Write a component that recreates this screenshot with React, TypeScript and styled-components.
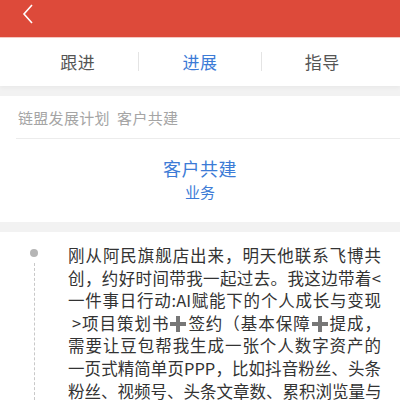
import React from 'react';
import styled, { createGlobalStyle } from 'styled-components';

const GlobalStyle = createGlobalStyle`
    body {
        margin: 0;
        background: #f2f2f2;
        font-family: "Noto Sans CJK SC", "Noto Sans", sans-serif;
    }
`

const Page = styled.div`
    width: 400px;
    height: 400px;
    overflow: hidden;
    background: #f2f2f2;
`

const Header = styled.div`
    height: 37px;
    background: #dd4a3a;
    border-bottom: 1px solid #f6c9c3;
    display: flex;
    align-items: flex-start;
    padding-left: 20px;
`

const Back = styled.svg`
    width: 16px;
    height: 22px;
    margin-top: 4px;
`

const Tabs = styled.div`
    height: 48px;
    background: #fff;
    display: flex;
    align-items: center;
    padding: 0 17px;
    box-shadow: 0 2px 4px rgba(0, 0, 0, 0.04);
`

const Tab = styled.div<{ $active?: boolean; $first?: boolean }>`
    flex: 1;
    text-align: center;
    font-size: 17px;
    color: ${p => (p.$active ? '#3c7bd6' : '#555')};
    border-left: ${p => (p.$first ? 'none' : '1px solid #e4e4e4')};
    line-height: 19px;
    margin-top: -2px;
    letter-spacing: 0.5px;
`

const Card = styled.div`
    background: #fff;
    margin-top: 10px;
`

const Crumb = styled.div`
    height: 42px;
    margin-left: 16px;
    border-bottom: 1px solid #ececec;
    display: flex;
    align-items: center;
    padding-left: 2px;
    font-size: 15px;
    color: #a5a5a5;
    letter-spacing: 0.3px;
`

const Summary = styled.div`
    height: 83px;
    display: flex;
    flex-direction: column;
    align-items: center;
    padding-top: 17px;
    box-sizing: border-box;
`

const Title = styled.div`
    font-size: 18px;
    color: #3c7bd6;
    line-height: 24px;
    letter-spacing: 0.5px;
`

const Sub = styled.div`
    font-size: 15px;
    color: #3c7bd6;
    line-height: 22px;
    margin-top: 1px;
`

const Feed = styled.div`
    background: #fff;
    margin-top: 10px;
    display: flex;
    padding-top: 12px;
    height: 300px;
`

const Rail = styled.div`
    width: 68px;
    display: flex;
    flex-direction: column;
    align-items: center;
    flex-shrink: 0;
`

const Dot = styled.div`
    width: 8px;
    height: 8px;
    border-radius: 50%;
    background: #b5b5b5;
    margin-top: 5px;
    margin-right: 1px;
`

const Dashes = styled.div`
    width: 0;
    flex: 1;
    margin-top: 6px;
    border-left: 1px dashed #c8c8c8;
`

const Body = styled.div`
    width: 313px;
    font-size: 16.5px;
    line-height: 22.6px;
    color: #333;
`

const Line = styled.span<{ $indent?: boolean }>`
    display: block;
    text-align: justify;
    text-align-last: justify;
    white-space: nowrap;
    padding-left: ${p => (p.$indent ? '4px' : '0')};
`

const Plus = styled.span`
    display: inline-block;
    position: relative;
    width: 16px;
    height: 16px;
    margin: 0 1px;
    vertical-align: -2px;

    &::before, &::after {
        content: "";
        position: absolute;
        background: #777;
    }
    &::before {
        left: 0;
        top: 6px;
        width: 16px;
        height: 4px;
    }
    &::after {
        left: 6px;
        top: 0;
        width: 4px;
        height: 16px;
    }
`

export default function App() {
    return (
        <Page>
            <GlobalStyle />
            <Header>
                <Back viewBox="0 0 16 22">
                    <path d="M12 1 L4 10 L12 19" fill="none" stroke="#fff" strokeWidth="1.6" />
                </Back>
            </Header>
            <Tabs>
                <Tab $first>跟进</Tab>
                <Tab $active>进展</Tab>
                <Tab>指导</Tab>
            </Tabs>
            <Card>
                <Crumb>链盟发展计划&nbsp;&nbsp;客户共建</Crumb>
                <Summary>
                    <Title>客户共建</Title>
                    <Sub>业务</Sub>
                </Summary>
            </Card>
            <Feed>
                <Rail>
                    <Dot />
                    <Dashes />
                </Rail>
                <Body>
                    <Line>刚从阿民旗舰店出来，明天他联系飞博共</Line>
                    <Line>创，约好时间带我一起过去。我这边带着&lt;</Line>
                    <Line>一件事日行动:AI赋能下的个人成长与变现</Line>
                    <Line $indent>&gt;项目策划书<Plus />签约（基本保障<Plus />提成，</Line>
                    <Line>需要让豆包帮我生成一张个人数字资产的</Line>
                    <Line>一页式精简单页PPP，比如抖音粉丝、头条</Line>
                    <Line>粉丝、视频号、头条文章数、累积浏览量与</Line>
                </Body>
            </Feed>
        </Page>
    );
}
